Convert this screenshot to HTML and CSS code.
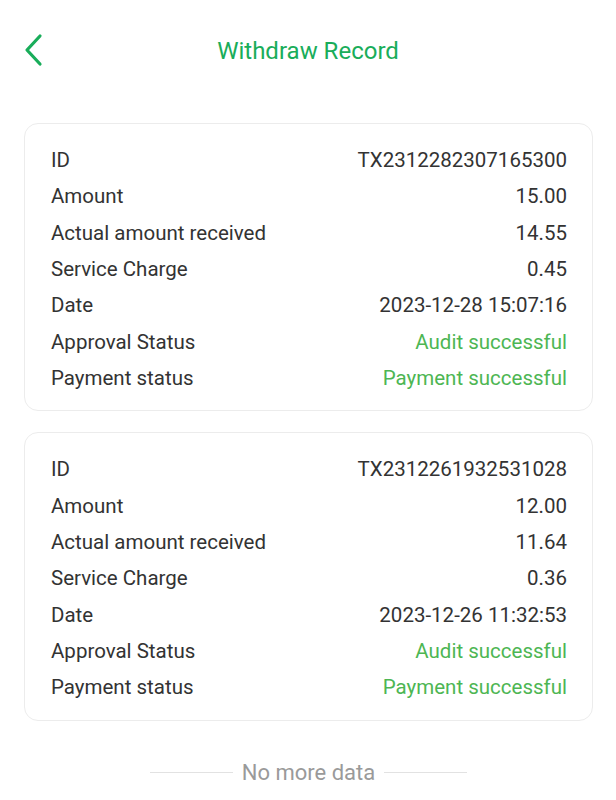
FILE: index.html
```html
<!DOCTYPE html>
<html>
<head>
<meta charset="utf-8">
<link rel="stylesheet" href="styles.css">
</head>
<body>
<header class="nav">
  <span class="back">
    <svg width="24" height="34" viewBox="0 0 24 34"><path d="M17 3 L4 17 L17 31" fill="none" stroke="#19ad5a" stroke-width="3.2" stroke-linecap="round" stroke-linejoin="round"/></svg>
  </span>
  <h1 class="title">Withdraw Record</h1>
</header>
<main class="list">
  <section class="card">
    <div class="row"><span>ID</span><span>TX2312282307165300</span></div>
    <div class="row"><span>Amount</span><span>15.00</span></div>
    <div class="row"><span>Actual amount received</span><span>14.55</span></div>
    <div class="row"><span>Service Charge</span><span>0.45</span></div>
    <div class="row"><span>Date</span><span>2023-12-28 15:07:16</span></div>
    <div class="row"><span>Approval Status</span><span class="ok">Audit successful</span></div>
    <div class="row"><span>Payment status</span><span class="ok">Payment successful</span></div>
  </section>
  <section class="card">
    <div class="row"><span>ID</span><span>TX2312261932531028</span></div>
    <div class="row"><span>Amount</span><span>12.00</span></div>
    <div class="row"><span>Actual amount received</span><span>11.64</span></div>
    <div class="row"><span>Service Charge</span><span>0.36</span></div>
    <div class="row"><span>Date</span><span>2023-12-26 11:32:53</span></div>
    <div class="row"><span>Approval Status</span><span class="ok">Audit successful</span></div>
    <div class="row"><span>Payment status</span><span class="ok">Payment successful</span></div>
  </section>
  <div class="end"><span class="line"></span><span class="end-text">No more data</span><span class="line"></span></div>
</main>
</body>
</html>
```
FILE: styles.css
```css
* { box-sizing: border-box; }
html, body { margin: 0; padding: 0; background: #fff; }
body { font-family: Roboto, "Noto Sans", sans-serif; color: #333; width: 616px; }
.nav { position: relative; height: 100px; display: flex; align-items: center; justify-content: center; }
.back { position: absolute; left: 23px; top: 33px; width: 24px; height: 34px; }
.back svg { display: block; }
.title { margin: 2px 0 0 0; font-size: 24px; font-weight: 400; color: #19ad5a; line-height: 1; }
.list { padding: 23px 23px 0 24px; display: flex; flex-direction: column; gap: 21px; }
.card { border: 1px solid #ececec; border-radius: 14px; padding: 18px 25px 14px 26px; }
.row { display: flex; justify-content: space-between; align-items: center; height: 36.33px; font-size: 20.5px; color: #333; }
.ok { color: #4db653; }
.end { display: flex; align-items: center; justify-content: center; gap: 9px; margin-top: 11px; height: 40px; }
.line { width: 83px; height: 1px; background: #e2e2e2; }
.end-text { font-size: 22px; color: #9a9a9a; }
```
